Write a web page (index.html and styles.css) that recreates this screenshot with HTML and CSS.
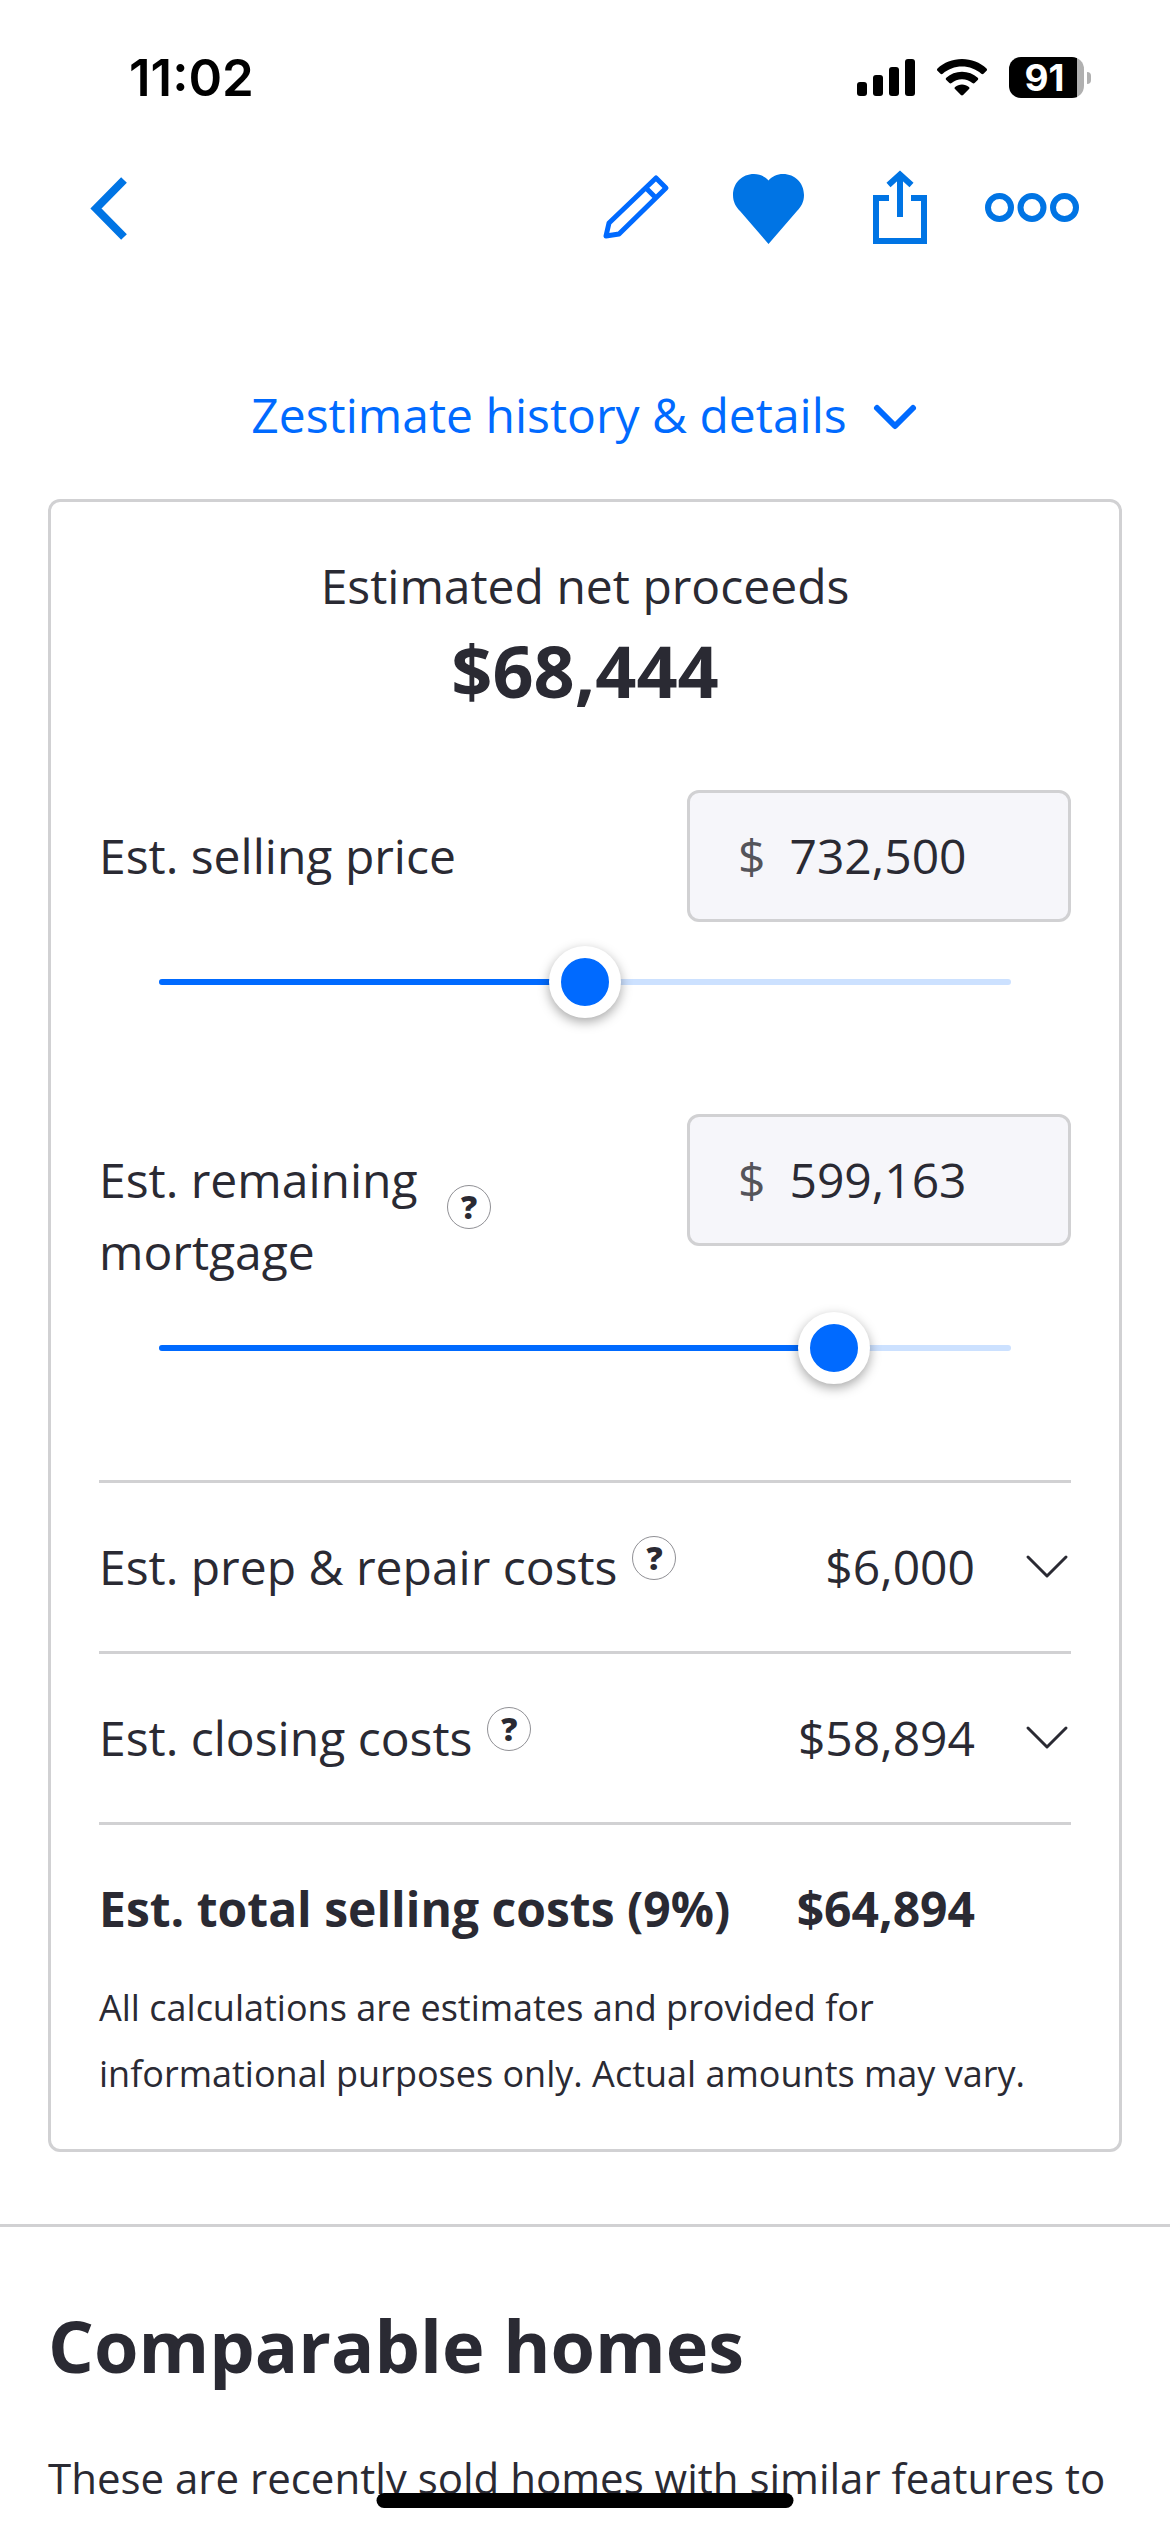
FILE: index.html
```html
<!DOCTYPE html>
<html lang="en">
<head>
  <meta charset="utf-8">
  <meta name="viewport" content="width=device-width">
  <title>Estimated net proceeds</title>
  <link rel="stylesheet" href="styles.css">
</head>
<body>
  <div class="status-bar">
    <span class="status-time">11:02</span>
    <div class="status-icons">
      <svg width="58" height="37" viewBox="0 0 58 37" aria-hidden="true">
        <rect x="0" y="23" width="10" height="14" rx="3"/>
        <rect x="16" y="16" width="10" height="21" rx="3"/>
        <rect x="32" y="8" width="10" height="29" rx="3"/>
        <rect x="48" y="0" width="10" height="37" rx="3"/>
      </svg>
      <svg width="50" height="37" viewBox="0 0 50 37" aria-hidden="true">
        <path d="M25 0C34.500 0 43 3.500 49.500 9.500c.700.700.700 1.600 0 2.300l-3 3c-.600.600-1.500.600-2.200 0C39 10.200 32.300 7.600 25 7.600S11 10.200 5.700 14.800c-.700.600-1.600.600-2.200 0l-3-3c-.700-.700-.700-1.600 0-2.300C7 3.500 15.500 0 25 0z"/>
        <path d="M25 12.700c6 0 11.500 2.200 15.700 6 .700.700.700 1.600 0 2.300l-3.100 3.100c-.600.600-1.500.600-2.200 0-2.800-2.400-6.400-3.800-10.400-3.800s-7.600 1.400-10.400 3.800c-.700.600-1.600.600-2.200 0L9.300 21c-.700-.700-.700-1.600 0-2.300 4.200-3.800 9.700-6 15.700-6z"/>
        <path d="M25 25.400c2.600 0 5 .9 6.900 2.500.7.600.7 1.600.1 2.200l-5.900 6c-.6.600-1.600.6-2.200 0l-5.900-6c-.6-.6-.6-1.600.1-2.200 1.900-1.600 4.300-2.500 6.900-2.500z"/>
      </svg>
      <div class="battery"><span class="battery-level">91</span></div>
    </div>
  </div>

  <header class="toolbar">
    <button class="icon-button back" aria-label="Back">
      <svg width="40" height="80" viewBox="0 0 40 80"><path d="M35 13L7 41.500 35 70" stroke-width="8"/></svg>
    </button>
    <button class="icon-button edit" aria-label="Edit">
      <svg width="80" height="80" viewBox="0 0 80 80"><path d="M58 11l10 10-47 46-13 2 3-13zM48 21l10 10" stroke-width="5" stroke-linejoin="round"/></svg>
    </button>
    <button class="icon-button" aria-label="Saved">
      <svg width="92" height="80" viewBox="0 0 92 80"><path class="filled" d="M45.500 77L17 44C13 40 10 35 10 28 10 16 19 7 31 7c6 0 11 2.500 14.500 6.500C49 9.500 54 7 60 7c12 0 21 9 21 21 0 7-3 12-7 16z"/></svg>
    </button>
    <button class="icon-button" aria-label="Share">
      <svg width="80" height="80" viewBox="0 0 80 80"><path d="M29 31H16v43h48V31H51M40 50V8M28.500 18L40 7.500 51.500 18" stroke-width="6"/></svg>
    </button>
    <button class="icon-button" aria-label="More">
      <svg width="94" height="80" viewBox="0 0 94 80" stroke-width="6"><circle cx="14.500" cy="40.500" r="11.500"/><circle cx="47" cy="40.500" r="11.500"/><circle cx="79.500" cy="40.500" r="11.500"/></svg>
    </button>
  </header>

  <main>
    <section class="estimate">
      <button class="history-toggle">
        Zestimate history &amp; details
        <svg class="chevron bold" width="48" height="48" viewBox="0 0 48 48" aria-hidden="true"><path d="M6 17l18 18 18-18"/></svg>
      </button>

      <div class="card">
        <h2 class="net-label">Estimated net proceeds</h2>
        <p class="net-amount">$68,444</p>

        <div class="field">
          <div class="field-name"><label for="price">Est. selling price</label></div>
          <div class="money"><span class="currency">$</span><input id="price" type="text" inputmode="numeric" value="732,500"></div>
        </div>
        <div class="slider">
          <div class="track"><div class="track-fill" style="width: 50%"></div></div>
          <input type="range" min="0" max="1465000" value="732500" step="any" aria-label="Est. selling price">
        </div>

        <div class="field second">
          <div class="field-name">
            <label for="mortgage">Est. remaining mortgage</label>
            <button class="help" aria-label="About remaining mortgage">?</button>
          </div>
          <div class="money"><span class="currency">$</span><input id="mortgage" type="text" inputmode="numeric" value="599,163"></div>
        </div>
        <div class="slider">
          <div class="track"><div class="track-fill" style="width: 79%"></div></div>
          <input type="range" min="0" max="756000" value="599163" step="any" aria-label="Est. remaining mortgage">
        </div>

        <div class="costs">
          <div class="cost">
            <span>Est. prep &amp; repair costs</span>
            <button class="help" aria-label="About prep and repair costs">?</button>
            <span class="amount">$6,000</span>
            <button class="expand" aria-label="Show prep and repair costs">
              <svg class="chevron" width="48" height="48" viewBox="0 0 48 48"><path d="M5 14l19 19 19-19"/></svg>
            </button>
          </div>
          <div class="cost">
            <span>Est. closing costs</span>
            <button class="help" aria-label="About closing costs">?</button>
            <span class="amount">$58,894</span>
            <button class="expand" aria-label="Show closing costs">
              <svg class="chevron" width="48" height="48" viewBox="0 0 48 48"><path d="M5 14l19 19 19-19"/></svg>
            </button>
          </div>
          <div class="cost total">
            <span>Est. total selling costs (9%)</span>
            <span class="amount">$64,894</span>
          </div>
        </div>
        <p class="note">All calculations are estimates and provided for informational purposes only. Actual amounts may vary.</p>
      </div>
    </section>

    <section class="comparable">
      <h1>Comparable homes</h1>
      <p>These are recently sold homes with similar features to</p>
    </section>
  </main>

  <div class="home-indicator"></div>
</body>
</html>
```

FILE: styles.css
```css
:root {
  --text: #2a2a33;
  --blue: #006aff;
  --icon-blue: #0074e4;
  --line: #d1d1d3;
}

* {
  box-sizing: border-box;
}

body {
  margin: 0;
  background: #fff;
  color: var(--text);
  font: 48px/72px "Open Sans", "Noto Sans", sans-serif;
}

h1, h2, p {
  margin: 0;
}

button {
  padding: 0;
  border: 0;
  background: none;
  color: inherit;
  font: inherit;
  cursor: pointer;
}

svg {
  display: block;
  flex: none;
}

/* Status bar */
.status-bar {
  display: flex;
  align-items: center;
  justify-content: space-between;
  height: 141px;
  padding: 14px 79px 0 129px;
  color: #000;
  font-family: Inter, "Liberation Sans", sans-serif;
}

.status-time {
  font-size: 51px;
  font-weight: 600;
}

.status-icons {
  display: flex;
  align-items: center;
  gap: 22px;
}

.battery {
  display: flex;
  align-items: center;
  gap: 3px;
}

.battery::after {
  content: "";
  width: 4px;
  height: 12px;
  border-radius: 0 4px 4px 0;
  background: #b0b0b0;
}

.battery-level {
  width: 75px;
  padding-right: 4px;
  border-radius: 12px;
  background: linear-gradient(to right, #000 68px, #b0b0b0 68px);
  color: #fff;
  font-size: 37px;
  font-weight: 700;
  line-height: 41px;
  text-align: center;
}

/* Toolbar */
.toolbar {
  display: flex;
  align-items: center;
  gap: 45px;
  height: 132px;
  padding: 0 91px 0 89px;
}

.icon-button {
  color: var(--icon-blue);
}

.icon-button svg {
  fill: none;
  stroke: currentColor;
}

.icon-button .filled {
  fill: currentColor;
  stroke: none;
}

.back {
  margin-right: auto;
}

.edit {
  color: var(--blue);
}

/* Net proceeds */
.estimate {
  padding: 106px 48px 72px;
  border-bottom: 3px solid var(--line);
}

.history-toggle {
  display: flex;
  align-items: center;
  gap: 24px;
  margin: 0 auto 48px;
  color: var(--blue);
}

.chevron {
  fill: none;
  stroke: currentColor;
  stroke-width: 3;
  stroke-linecap: round;
  stroke-linejoin: round;
}

.chevron.bold {
  stroke-width: 6;
}

.card {
  padding: 48px 48px 42px;
  border: 3px solid var(--line);
  border-radius: 12px;
}

.net-label {
  font-size: 48px;
  font-weight: 400;
  text-align: center;
}

.net-amount {
  margin-bottom: 72px;
  font-size: 72px;
  font-weight: 700;
  line-height: 96px;
  text-align: center;
}

.field {
  display: flex;
  align-items: flex-start;
  justify-content: space-between;
  margin-bottom: 24px;
}

.field.second {
  margin-top: 96px;
}

.field-name {
  display: flex;
  align-items: center;
  gap: 24px;
  padding-top: 30px;
}

.field-name label {
  max-width: 372px;
}

.second label {
  max-width: 324px;
}

.money {
  display: flex;
  align-items: center;
  gap: 24px;
  width: 384px;
  height: 132px;
  padding: 0 48px;
  border: 3px solid var(--line);
  border-radius: 12px;
  background: #f6f6fa;
}

.currency {
  color: #54545a;
}

.money input {
  flex: 1;
  min-width: 0;
  padding: 0;
  border: 0;
  outline: 0;
  background: none;
  color: inherit;
  font: inherit;
}

.help {
  flex: none;
  width: 44px;
  height: 44px;
  margin-bottom: 18px;
  border: 1px solid #909095;
  border-radius: 50%;
  font-size: 32px;
  font-weight: 800;
  line-height: 40px;
}

/* Slider: the track lies under a range input that is wider by one thumb */
.slider {
  display: grid;
  align-items: center;
  margin: 0 24px;
}

.slider > * {
  grid-area: 1 / 1;
}

.track {
  height: 6px;
  margin: 0 36px;
  overflow: hidden;
  border-radius: 3px;
  background: #cce1ff;
}

.track-fill {
  height: 100%;
  background: var(--blue);
}

.slider input {
  width: 100%;
  height: 72px;
  margin: 0;
  appearance: none;
  background: none;
}

.slider input::-webkit-slider-thumb {
  width: 72px;
  height: 72px;
  appearance: none;
  border: 12px solid #fff;
  border-radius: 50%;
  background: var(--blue);
  box-shadow: 0 4px 12px rgba(0, 0, 0, 0.35);
}

/* Costs */
.costs {
  margin-top: 96px;
}

.cost {
  display: flex;
  align-items: center;
  gap: 15px;
  padding: 48px 0;
  border-top: 3px solid var(--line);
}

.amount {
  margin-left: auto;
}

.expand {
  margin-left: 33px;
}

.total {
  padding: 48px 96px 30px 0;
  font-weight: 700;
}

.note {
  font-size: 36px;
  line-height: 66px;
}

/* Comparable homes */
.comparable {
  padding: 70px 48px 0;
}

.comparable h1 {
  margin-bottom: 52px;
  font-size: 72px;
  line-height: 96px;
}

.comparable p {
  font-size: 42px;
  line-height: 66px;
}

.home-indicator {
  position: fixed;
  bottom: 24px;
  left: 50%;
  width: 417px;
  height: 15px;
  border-radius: 8px;
  background: #000;
  transform: translateX(-50%);
}
```
